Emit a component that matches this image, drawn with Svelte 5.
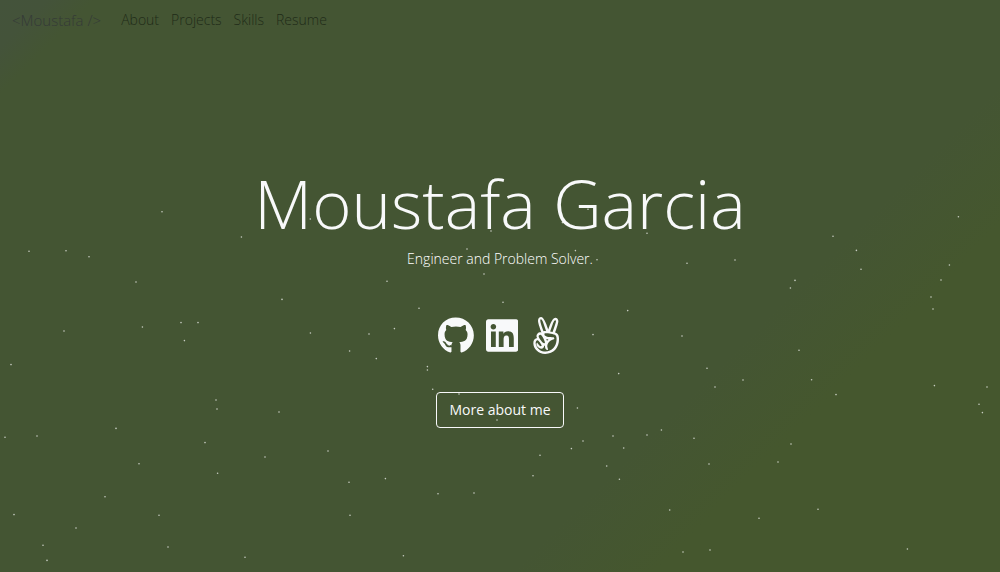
<script>
  const links = ['About', 'Projects', 'Skills', 'Resume'];

  const socials = [
    {
      name: 'GitHub',
      box: '0 0 496 512',
      d: 'M165.9 397.4c0 2-2.3 3.6-5.2 3.6-3.3.3-5.6-1.3-5.6-3.6 0-2 2.3-3.6 5.2-3.6 3-.3 5.6 1.3 5.6 3.6zm-31.1-4.5c-.7 2 1.3 4.3 4.3 4.9 2.6 1 5.6 0 6.2-2s-1.3-4.3-4.3-5.2c-2.6-.7-5.5.3-6.2 2.3zm44.2-1.7c-2.9.7-4.9 2.6-4.6 4.9.3 2 2.9 3.3 5.9 2.6 2.9-.7 4.9-2.6 4.6-4.6-.3-1.9-3-3.2-5.9-2.9zM244.8 8C106.1 8 0 113.3 0 252c0 110.9 69.8 205.8 169.5 239.2 12.8 2.3 17.3-5.6 17.3-12.1 0-6.2-.3-40.4-.3-61.4 0 0-70 15-84.7-29.8 0 0-11.4-29.1-27.8-36.6 0 0-22.9-15.7 1.6-15.4 0 0 24.9 2 38.6 25.8 21.9 38.6 58.6 27.5 72.9 20.9 2.3-16 8.8-27.1 16-33.7-55.9-6.2-112.3-14.3-112.3-110.5 0-27.5 7.6-41.3 23.6-58.9-2.6-6.5-11.1-33.3 2.6-67.9 20.9-6.5 69 27 69 27 20-5.6 41.5-8.5 62.8-8.5s42.8 2.9 62.8 8.5c0 0 48.1-33.6 69-27 13.7 34.7 5.2 61.4 2.6 67.9 16 17.7 25.8 31.5 25.8 58.9 0 96.5-58.9 104.2-114.8 110.5 9.2 7.9 17 22.9 17 46.4 0 33.7-.3 75.4-.3 83.6 0 6.5 4.6 14.4 17.3 12.1C428.2 457.8 496 362.9 496 252 496 113.3 383.5 8 244.8 8z'
    },
    {
      name: 'LinkedIn',
      box: '0 0 448 512',
      d: 'M416 32H31.9C14.3 32 0 46.5 0 64.3v383.4C0 465.5 14.3 480 31.9 480H416c17.6 0 32-14.5 32-32.3V64.3c0-17.8-14.4-32.3-32-32.3zM135.4 416H69V202.2h66.5V416zm-33.2-243c-21.3 0-38.5-17.3-38.5-38.5S80.9 96 102.2 96c21.2 0 38.5 17.3 38.5 38.5 0 21.3-17.2 38.5-38.5 38.5zm282.1 243h-66.4V312c0-24.8-.5-56.7-34.5-56.7-34.6 0-39.9 27-39.9 54.9V416h-66.4V202.2h63.7v29.2h.9c8.9-16.8 30.6-34.5 62.9-34.5 67.2 0 79.7 44.3 79.7 101.9V416z'
    },
    {
      name: 'AngelList',
      box: '0 0 448 512',
      d: 'M347.1 215.4c11.7-32.6 45.4-126.9 45.4-157.1 0-26.6-15.7-48.9-43.7-48.9-44.6 0-84.6 131.7-97.1 163.1C242 144 196.6 0 156.6 0c-31.1 0-45.7 22.9-45.7 51.7 0 35.3 34.2 126.8 46.6 162-6.3-2.3-13.1-4.3-20-4.3-23.4 0-48.3 29.1-48.3 52.6 0 8.9 4.9 21.4 8 29.7-36.9 10-51.1 34.6-51.1 71.7C46 435.6 114.4 512 210.6 512c118 0 191.4-88.6 191.4-202.9 0-43.1-6.9-82-54.9-93.7zM311.7 108c4-12.3 21.1-64.3 37.1-64.3 8.6 0 10.9 8.9 10.9 16 0 19.1-38.6 124.6-47.1 148l-34-6 33.1-93.7zM142.3 48.3c0-11.9 14.5-45.7 46.3 47.1l34.6 100.3c-15.6-1.3-27.7-3-35.4 1.4-10.9-28.8-45.5-119.7-45.5-148.8zM140 244c29.3 0 67.1 94.6 67.1 107.4 0 5.1-4.9 11.4-10.6 11.4-20.9 0-76.9-76.9-76.9-97.7.1-7.7 12.7-21.1 20.4-21.1zm184.3 186.3c-29.1 32-66.3 48.6-109.7 48.6-59.4 0-106.3-32.6-128.9-88.3-17.1-43.4 3.8-68.3 20.6-68.3 11.4 0 54.3 60.3 54.3 73.1 0 4.9-7.7 8.3-11.7 8.3-16.1 0-22.4-15.5-51.1-51.4-29.7 29.7 20.5 86.9 58.3 86.9 26.1 0 43.1-24.2 38-42 3.7 0 8.3.3 11.7-.6 1.1 27.1 9.1 59.4 41.7 61.7 0-.9 2-7.1 2-7.4 0-17.4-10.6-32.6-10.6-50.3 0-28.3 21.7-55.7 43.7-71.7 8-6 17.7-9.7 27.1-13.1 9.7-3.7 20-8 27.4-15.4-1.1-11.2-5.7-21.1-16.9-21.1-27.7 0-120.6 4-120.6-39.7 0-6.7.1-13.1 17.4-13.1 32.3 0 114.3 8 138.3 29.1 18.1 16.1 24.3 113.2-31 174.7zm-98.6-126c9.7 3.1 19.7 4 29.7 6-7.4 5.4-14 12-20.3 19.1-2.8-8.5-6.2-16.8-9.4-25.1z'
    }
  ];

  const stars = [
    [162, 211.7], [241.4, 237], [29, 251.3], [66, 250.7], [89, 256.7], [136, 282], [282, 299.4],
    [142.4, 327], [181, 322.6], [198, 322.6], [184.4, 340.6], [64, 331], [310.4, 333], [11, 364.6],
    [310.3, 219], [216, 400], [217, 409], [279, 412], [116, 428.4], [5, 437.3], [37, 436],
    [205, 442.6], [139, 463.7], [265, 457], [328, 451], [217.6, 473.3], [105, 496.7], [14, 514.6],
    [159, 515.3], [76, 528], [43, 545.3], [47, 560.4], [168, 547], [245, 557.3], [432.7, 389.3],
    [459, 394], [497, 420], [577.4, 408], [583, 441], [613, 436], [647, 435], [661.4, 430],
    [623.7, 448], [571.4, 448.6], [540, 455.3], [533, 475.7], [606.7, 466], [619.4, 479.3],
    [349, 482.3], [385.4, 478.6], [438, 493.7], [474, 493], [350, 515.3], [403.4, 555.7],
    [669.7, 510], [715, 387], [743, 380], [811.6, 379.7], [836, 394.6], [934.4, 385.6],
    [987, 387], [979, 404.3], [982.4, 412.6], [694, 438.3], [791, 444], [709, 464], [778, 462],
    [818, 509.3], [759, 518.3], [683, 552], [710, 550], [907.4, 549], [958.4, 216.7],
    [833, 236.3], [856.4, 250.4], [861, 269.3], [949.4, 265], [941, 280], [931, 297], [933, 309],
    [735, 260], [687, 263.3], [795, 280.4], [790.4, 288], [682, 336], [799, 350.3], [707, 368.3],
    [491, 231], [647, 233.3], [467, 249], [575.4, 250.6], [597, 259.7], [387, 281.3], [484, 274],
    [503, 302.3], [419, 308.3], [627.7, 310.6], [593, 334.6], [394.4, 328.6], [369, 334],
    [349.6, 351], [376.3, 358.6], [427.4, 366.6], [427.4, 370], [618.7, 373.6], [562.4, 222.6],
    [588, 209.3]
  ];
</script>

<div class="page">
  <svg class="sky" viewBox="0 0 1000 572" preserveAspectRatio="xMidYMid slice" aria-hidden="true">
    {#each stars as [x, y]}
      <circle cx={x} cy={y} r="0.8" />
    {/each}
  </svg>

  <nav class="navbar">
    <a class="brand" href="#home">&lt;Moustafa /&gt;</a>
    <ul>
      {#each links as link}
        <li><a href={'#' + link.toLowerCase()}>{link}</a></li>
      {/each}
    </ul>
  </nav>

  <main class="hero">
    <h1>Moustafa Garcia</h1>
    <p>Engineer and Problem Solver.</p>
    <div class="socials">
      {#each socials as s}
        <a href={'#' + s.name.toLowerCase()} aria-label={s.name}>
          <svg viewBox={s.box} aria-hidden="true"><path d={s.d} /></svg>
        </a>
      {/each}
    </div>
    <button type="button">More about me</button>
  </main>
</div>

<style>
  :global(body) {
    margin: 0;
  }

  .page {
    position: relative;
    display: flex;
    flex-direction: column;
    min-height: 100vh;
    font-family: 'Open Sans', 'Noto Sans', sans-serif;
    color: #f8f9fa;
    background: linear-gradient(135deg, #44533b 0%, #44533a 3%, #445533 6%, #445533 69%, #45572e 78%, #45572e 100%);
  }

  .sky {
    position: absolute;
    inset: 0;
    width: 100%;
    height: 100%;
    fill: rgba(255, 255, 255, 0.7);
    pointer-events: none;
  }

  .navbar {
    position: relative;
    display: flex;
    align-items: center;
    gap: 20px;
    padding: 8px 12px;
    font-size: 14px;
    line-height: 24px;
    font-weight: 300;
  }

  .navbar ul {
    display: flex;
    gap: 12px;
    margin: 0;
    padding: 0;
    list-style: none;
  }

  .navbar a {
    color: #1f2b18;
    text-decoration: none;
  }

  .navbar .brand {
    font-size: 15px;
    color: #343a37;
  }

  .hero {
    position: relative;
    display: flex;
    flex: 1;
    flex-direction: column;
    align-items: center;
    justify-content: center;
    padding-bottom: 25px;
    text-align: center;
  }

  h1 {
    margin: 0;
    font-size: 67px;
    line-height: 88px;
    font-weight: 300;
  }

  p {
    margin: 0 0 46px;
    font-size: 14px;
    line-height: 24px;
    font-weight: 300;
    color: #fff;
  }

  .socials {
    display: flex;
    gap: 12px;
    margin-bottom: 38px;
  }

  .socials a {
    display: flex;
    color: inherit;
  }

  .socials svg {
    height: 37px;
    fill: currentColor;
  }

  button {
    padding: 5px 12px;
    border: 1px solid #f8f9fa;
    border-radius: 4px;
    background: transparent;
    color: inherit;
    font: 400 14px/24px 'Open Sans', 'Noto Sans', sans-serif;
    cursor: pointer;
  }
</style>
